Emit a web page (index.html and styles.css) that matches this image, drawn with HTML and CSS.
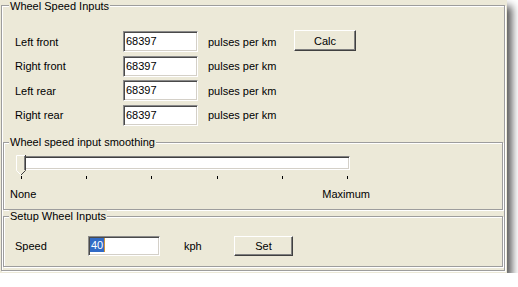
FILE: index.html
```html
<!DOCTYPE html>
<html>
<head>
<meta charset="utf-8">
<link rel="stylesheet" href="styles.css">
</head>
<body>
<div class="window">
  <section class="group outer">
    <div class="title">Wheel Speed Inputs</div>
    <div class="wheels">
      <span class="label">Left front</span><div class="field">68397</div><span class="unit">pulses per km</span><button class="btn calc">Calc</button>
      <span class="label">Right front</span><div class="field">68397</div><span class="unit">pulses per km</span>
      <span class="label">Left rear</span><div class="field">68397</div><span class="unit">pulses per km</span>
      <span class="label">Right rear</span><div class="field">68397</div><span class="unit">pulses per km</span>
    </div>
    <section class="group smoothing">
      <div class="title">Wheel speed input smoothing</div>
      <div class="slider">
        <div class="track"></div>
        <svg class="thumb" width="11" height="21" viewBox="0 0 11 21">
          <polygon points="0,0 10,0 10,15 5,20 0,15" fill="#ECE9D8"/>
          <polyline points="0.5,15.5 0.5,0.5 9.5,0.5" fill="none" stroke="#ffffff" stroke-width="1"/>
          <line x1="0.5" y1="15.5" x2="5" y2="20" stroke="#ffffff" stroke-width="1"/>
          <line x1="9.5" y1="0" x2="9.5" y2="15.5" stroke="#404040" stroke-width="1"/>
          <line x1="8.5" y1="1" x2="8.5" y2="15" stroke="#808080" stroke-width="1"/>
          <line x1="9.5" y1="15.5" x2="5" y2="20" stroke="#404040" stroke-width="1"/>
        </svg>
        <div class="ticks"><i></i><i></i><i></i><i></i><i></i><i></i></div>
      </div>
      <div class="scale"><span>None</span><span>Maximum</span></div>
    </section>
    <section class="group setup">
      <div class="title">Setup Wheel Inputs</div>
      <div class="speed-row">
        <span class="speed-label">Speed</span>
        <div class="field speed"><span class="sel">40</span></div>
        <span class="kph">kph</span>
        <button class="btn set">Set</button>
      </div>
    </section>
  </section>
</div>
</body>
</html>
```

FILE: styles.css
```css
html, body {
  margin: 0;
  padding: 0;
  background: #ffffff;
}

body {
  font-family: "Liberation Sans", Arial, sans-serif;
  font-size: 11px;
  color: #000;
}

.window {
  box-sizing: border-box;
  width: 507px;
  height: 273px;
  padding: 5px 0 0 1px;
  background: #ECE9D8;
  box-shadow: 5px 6px 8px rgba(0, 0, 0, 0.66);
}

.group {
  box-sizing: border-box;
  display: flex;
  flex-direction: column;
  align-items: flex-start;
  border: 1px solid #9d9d9d;
  box-shadow: inset 1px 1px 0 #ffffff, 1px 1px 0 #ffffff;
}

.title {
  background: #ECE9D8;
  line-height: 13px;
  height: 13px;
  padding: 0 1px;
  margin-top: -7px;
  margin-left: 5px;
  white-space: nowrap;
}

.outer {
  width: 504px;
  height: 266px;
}

.outer > .title {
  margin-top: -6px;
  margin-left: 7px;
}

.wheels {
  display: grid;
  grid-template-columns: 108px 85px 86px 62px;
  grid-auto-rows: 21px;
  row-gap: 3.67px;
  align-items: center;
  margin-top: 18px;
  margin-left: 13px;
}

.label {
  grid-column: 1;
  white-space: nowrap;
}

.unit {
  white-space: nowrap;
}

.field {
  box-sizing: border-box;
  width: 75px;
  height: 21px;
  background: #ffffff;
  border: 1px solid;
  border-color: #8a8a8a #ffffff #ffffff #8a8a8a;
  box-shadow: inset 1px 1px 0 #4a4a4a, inset -1px -1px 0 #d4d0c8;
  padding-left: 2px;
  line-height: 18px;
  white-space: nowrap;
}

.btn {
  box-sizing: border-box;
  margin: 0;
  padding: 0;
  font-family: inherit;
  font-size: 11px;
  color: #000;
  background: #ECE9D8;
  border: 1px solid;
  border-color: #ffffff #404040 #404040 #ffffff;
  box-shadow: inset -1px -1px 0 #808080;
}

.calc {
  width: 62px;
  height: 21px;
  align-self: start;
  margin-top: -1px;
}

.smoothing {
  width: 500px;
  height: 68px;
  margin-top: 16px;
  margin-left: 1px;
}

.slider {
  position: relative;
  margin-top: 6px;
  margin-left: 12px;
  width: 340px;
}

.track {
  box-sizing: border-box;
  width: 330px;
  height: 14px;
  margin-top: 1px;
  margin-left: 4px;
  background: #ffffff;
  border: 1px solid;
  border-color: #808080 #ffffff #ffffff #808080;
  box-shadow: inset 1px 1px 0 #404040, inset -1px -1px 0 #d4d0c8;
}

.thumb {
  position: absolute;
  left: 0;
  top: 0;
  display: block;
}

.ticks {
  display: flex;
  justify-content: space-between;
  width: 327px;
  height: 3px;
  margin-top: 6px;
  margin-left: 5px;
}

.ticks i {
  display: block;
  width: 1px;
  height: 3px;
  background: #000;
}

.scale {
  display: flex;
  justify-content: space-between;
  width: 360px;
  margin-top: 9px;
  margin-left: 6px;
  line-height: 13px;
}

.setup {
  width: 500px;
  height: 51px;
  margin-top: 6px;
  margin-left: 1px;
}

.speed-row {
  display: flex;
  align-items: center;
  height: 20px;
  margin-top: 13px;
  margin-left: 11px;
}

.speed-label {
  width: 73px;
}

.field.speed {
  width: 72px;
  height: 20px;
  padding-left: 1px;
  padding-top: 1px;
  line-height: 14px;
}

.sel {
  display: inline-block;
  height: 14px;
  line-height: 14px;
  padding: 0 1px;
  background: #316AC5;
  color: #ffffff;
  border-right: 1px solid #CE953A;
}

.kph {
  width: 50px;
  margin-left: 24px;
}

.set {
  width: 59px;
  height: 20px;
}
```
